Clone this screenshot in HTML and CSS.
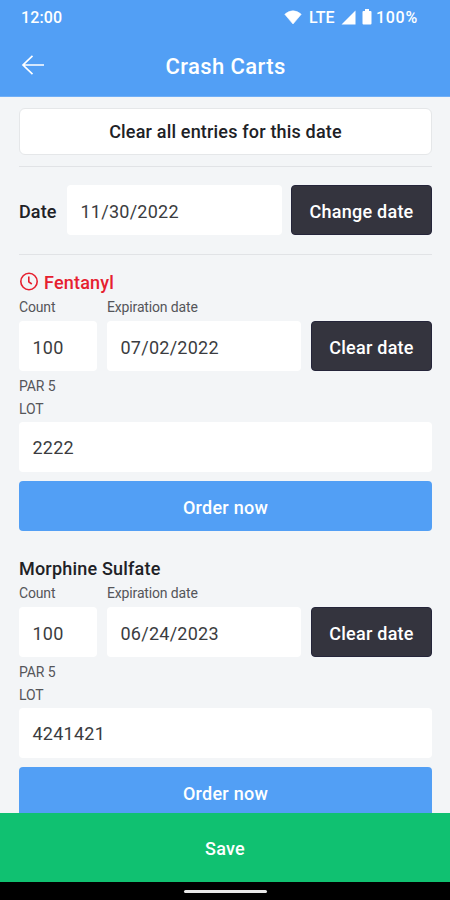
FILE: index.html
```html
<!DOCTYPE html>
<html lang="en">
<head>
<meta charset="utf-8">
<title>Crash Carts</title>
<link rel="stylesheet" href="styles.css">
</head>
<body>
<div class="app">
  <header class="header">
    <div class="status">
      <span class="clock">12:00</span>
      <svg class="wifi" width="18" height="15" viewBox="0 0 18 15"><path d="M9 14 .8 4.300Q4.500.8 9 .8t8.200 3.500Z" fill="#fff" stroke="#fff" stroke-linejoin="round" stroke-width=".6"/></svg>
      <span class="lte">LTE</span>
      <svg class="signal" width="15" height="15" viewBox="0 0 15 15"><path d="M14.500.5v14H.5Z" fill="#fff"/></svg>
      <svg class="battery" width="10" height="16" viewBox="0 0 10 16"><path d="M3 0h4v2h1.500Q9.500 2 9.500 3v11.500Q9.500 15.500 8.500 15.500h-7Q.5 15.500.5 14.500V3Q.5 2 1.500 2H3Z" fill="#fff"/></svg>
      <span class="level">100%</span>
    </div>
    <div class="titlebar">
      <svg class="back" width="24" height="22" viewBox="0 0 24 22"><path d="M23 11H2M11.500 1.800 2 11l9.500 9.200" fill="none" stroke="#fff" stroke-width="1.700"/></svg>
      <h1 class="title">Crash Carts</h1>
    </div>
  </header>
  <main class="content">
    <button class="clear-all">Clear all entries for this date</button>
    <section class="date-row">
      <span class="date-label">Date</span>
      <div class="field grow">11/30/2022</div>
      <button class="dark change">Change date</button>
    </section>
    <section class="item">
      <h2 class="name expired"><svg class="alert" width="20" height="20" viewBox="0 0 20 20"><g fill="none" stroke="#e6202f" stroke-width="1.600"><circle cx="10" cy="9.500" r="8.200"/><path d="M9.800 4.500v5.300l3 2.200"/></g></svg>Fentanyl</h2>
      <div class="labels"><span class="count-label">Count</span><span>Expiration date</span></div>
      <div class="entry"><div class="field count">100</div><div class="field grow">07/02/2022</div><button class="dark clear">Clear date</button></div>
      <p class="meta">PAR 5</p>
      <p class="meta">LOT</p>
      <div class="field lot">2222</div>
      <button class="order">Order now</button>
    </section>
    <section class="item">
      <h2 class="name">Morphine Sulfate</h2>
      <div class="labels"><span class="count-label">Count</span><span>Expiration date</span></div>
      <div class="entry"><div class="field count">100</div><div class="field grow">06/24/2023</div><button class="dark clear">Clear date</button></div>
      <p class="meta">PAR 5</p>
      <p class="meta">LOT</p>
      <div class="field lot">4241421</div>
      <button class="order">Order now</button>
    </section>
  </main>
  <button class="save">Save</button>
  <div class="nav"><span class="handle"></span></div>
</div>
</body>
</html>
```
FILE: styles.css
```css
* { box-sizing: border-box; }
body { margin: 0; font-family: Roboto, sans-serif; color: #202126; }
button { border: 0; padding: 2px 0 0; font: 500 18px Roboto, sans-serif; letter-spacing: .25px; }
h1, h2, p { margin: 0; }
svg { display: block; flex: none; }
.app { display: flex; flex-direction: column; width: 450px; height: 900px; overflow: hidden; background: #f3f5f7; }
.header { flex: none; height: 97px; background: #529ff5; color: #fff; border-bottom: 1px solid #70aff7; }
.status { display: flex; align-items: center; height: 34px; padding-left: 21px; font: 500 16px Roboto, sans-serif; }
.clock { width: 263px; letter-spacing: .1px; }
.lte { width: 28px; margin-left: 7px; }
.signal { margin-left: 4px; }
.battery { margin-left: 6px; }
.level { margin-left: 4px; letter-spacing: .7px; }
.titlebar { display: flex; align-items: center; height: 62px; padding-left: 21px; }
.title { width: 361px; padding-top: 2px; text-align: center; font-size: 22px; font-weight: 500; letter-spacing: .4px; }
.content { flex: 1; min-height: 0; overflow: hidden; padding: 11px 18px 0 19px; }
.clear-all { display: block; width: 100%; height: 47px; padding-top: 0; background: #fff; border: 1px solid #e5e7e9; border-radius: 6px; color: #202126; letter-spacing: .18px; }
.date-row { display: flex; align-items: center; height: 89px; margin-top: 11px; padding-bottom: 1px; border: solid #e1e3e6; border-width: 1px 0; }
.date-label { width: 48px; padding-top: 2px; font-size: 18px; font-weight: 500; letter-spacing: .1px; }
.field { display: flex; align-items: center; height: 50px; padding: 2px 0 0 13.5px; border-radius: 4px; background: #fff; color: #3b3c40; font-size: 18px; letter-spacing: .25px; }
.grow { flex: 1; }
.dark { height: 50px; border-radius: 4px; background: #34343e; border: 1px solid #25253a; color: #fff; }
.change { width: 141px; margin-left: 9px; }
.clear { width: 121px; }
.item { height: 286px; padding-top: 13px; }
.name { display: flex; align-items: center; height: 27px; padding-top: 1px; font-size: 18px; font-weight: 500; letter-spacing: .2px; }
.expired { color: #e6202f; }
.alert { margin-right: 5px; }
.labels { display: flex; align-items: center; height: 26px; padding-bottom: 2px; font-size: 14px; color: #55565a; letter-spacing: -.15px; }
.count-label { width: 88px; }
.entry { display: flex; gap: 10px; margin-bottom: 4px; }
.count { width: 78px; }
.meta { height: 23px; line-height: 23px; font-size: 14px; letter-spacing: -.1px; color: #55565a; }
.lot { margin-top: 1px; padding-top: 1px; }
.order { display: block; width: 100%; height: 50px; margin-top: 9px; background: #529ff5; border-radius: 4px; color: #fff; }
.save { flex: none; height: 69px; background: #10c171; color: #fff; }
.nav { flex: none; display: flex; justify-content: center; height: 18px; padding-top: 8px; background: #000; }
.handle { width: 83px; height: 3px; border-radius: 2px; background: #e8e8e8; }
```
